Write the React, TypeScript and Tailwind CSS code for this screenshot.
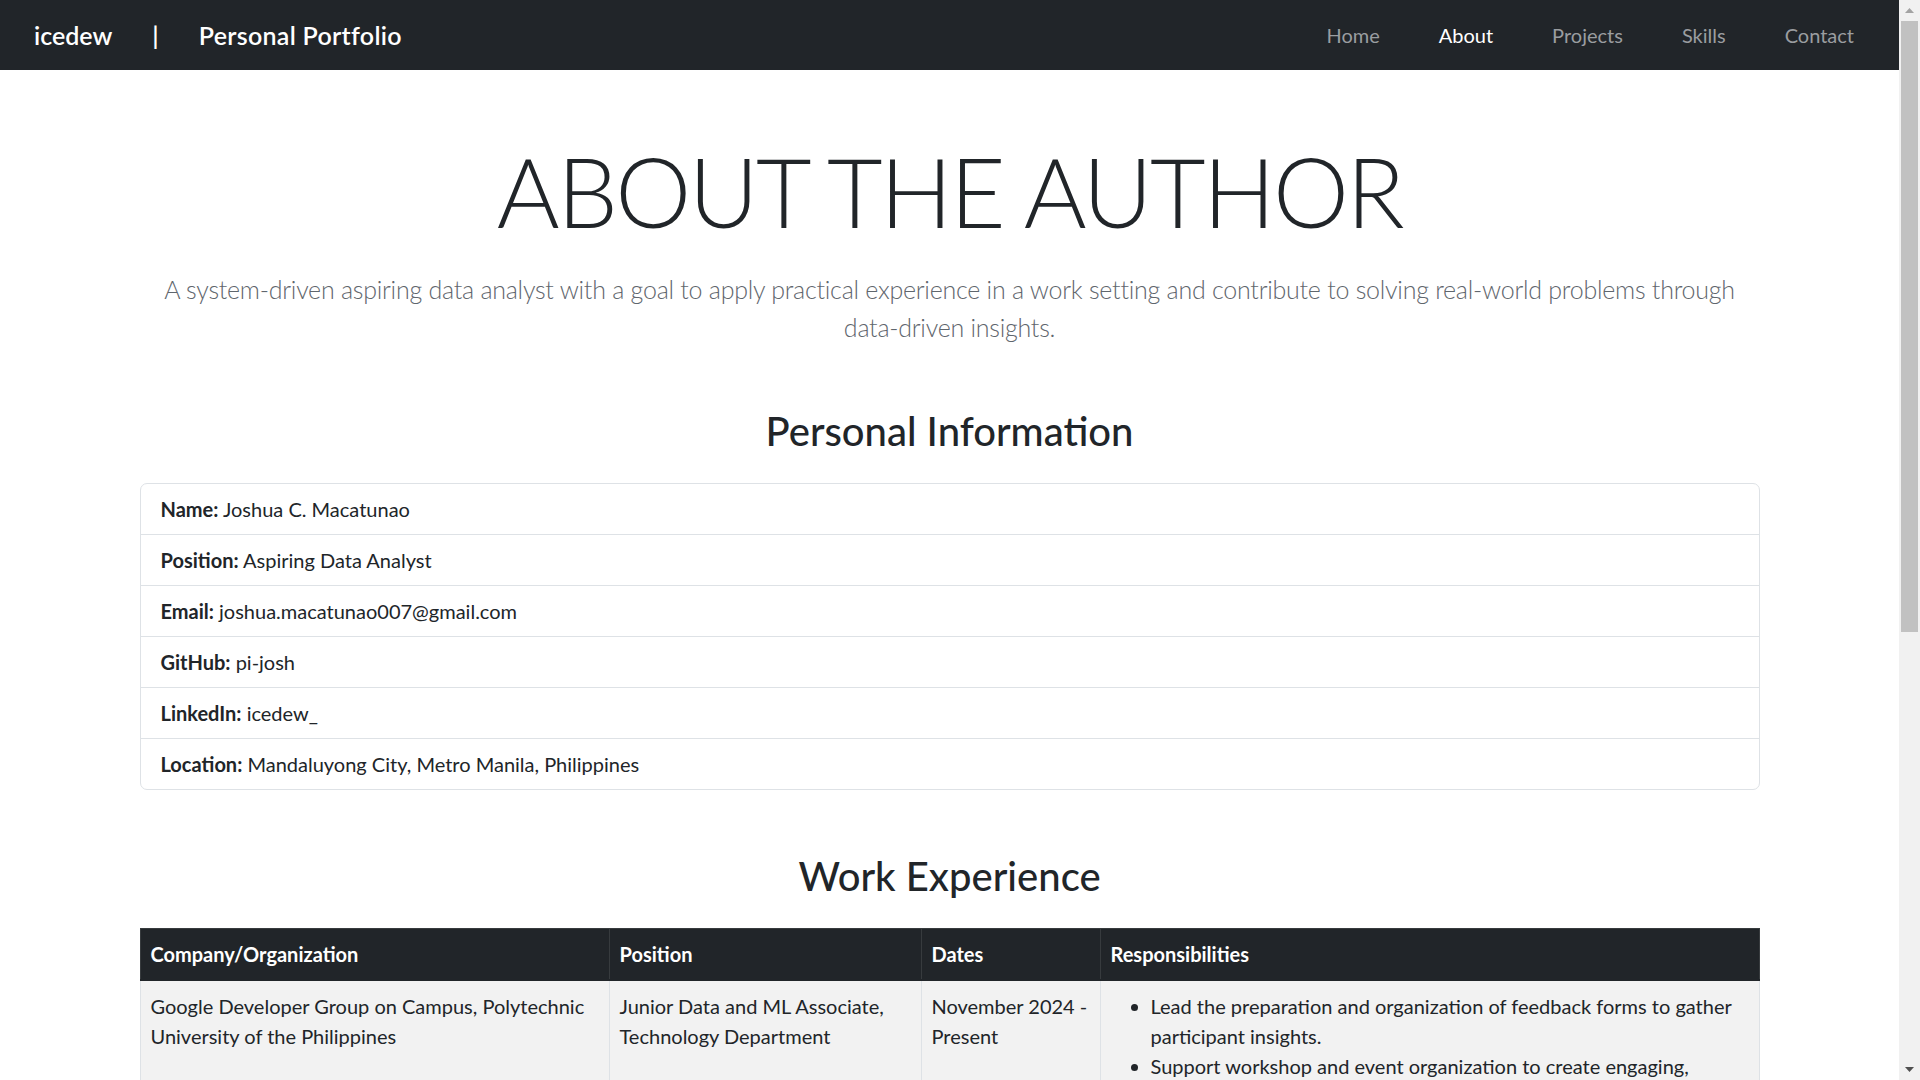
import { ReactNode } from 'react';

const navLinks = [
  { label: 'Home', active: false },
  { label: 'About', active: true },
  { label: 'Projects', active: false },
  { label: 'Skills', active: false },
  { label: 'Contact', active: false },
];

const info = [
  { label: 'Name:', value: 'Joshua C. Macatunao' },
  { label: 'Position:', value: 'Aspiring Data Analyst' },
  { label: 'Email:', value: 'joshua.macatunao007@gmail.com' },
  { label: 'GitHub:', value: 'pi-josh' },
  { label: 'LinkedIn:', value: 'icedew_' },
  { label: 'Location:', value: 'Mandaluyong City, Metro Manila, Philippines' },
];

const jobs = [
  {
    org: 'Google Developer Group on Campus, Polytechnic University of the Philippines',
    position: 'Junior Data and ML Associate, Technology Department',
    dates: 'November 2024 - Present',
    duties: [
      'Lead the preparation and organization of feedback forms to gather participant insights.',
      'Support workshop and event organization to create engaging, hands-on learning experiences for members.',
      'Assist in analyzing event data to improve future programs.',
    ],
  },
];

function Th({ children, className = '' }: { children: ReactNode; className?: string }) {
  return (
    <th className={`border border-[#373b3e] px-[10px] py-[10px] text-left align-top font-bold leading-[30px] ${className}`}>
      {children}
    </th>
  );
}

function Scrollbar() {
  return (
    <div className="flex h-full w-[21px] shrink-0 flex-col bg-[#f1f1f1]">
      <div className="flex h-[21px] items-center justify-center">
        <svg width="9" height="5" viewBox="0 0 9 5">
          <polygon points="0,5 4.5,0 9,5" fill="#a3a3a3" />
        </svg>
      </div>
      <div className="mx-[2px] h-[611px] bg-[#c1c1c1]" />
      <div className="flex-1" />
      <div className="flex h-[21px] items-center justify-center">
        <svg width="9" height="5" viewBox="0 0 9 5">
          <polygon points="0,0 9,0 4.5,5" fill="#505050" />
        </svg>
      </div>
    </div>
  );
}

export default function App() {
  return (
    <div className="flex h-[1080px] w-full overflow-hidden bg-white font-['Lato','Open_Sans',sans-serif] text-[20px] leading-[30px] text-[#212529]">
      <div className="min-w-0 flex-1 overflow-hidden">
        <nav className="flex h-[70px] items-center justify-between bg-[#212529] pl-[34px] pr-[45px]">
          <div className="flex items-center text-[25px] font-semibold text-white">
            <span>icedew</span>
            <span className="mx-[40px]">|</span>
            <span className="tracking-[0.3px]">Personal Portfolio</span>
          </div>
          <ul className="flex items-center gap-[59px]">
            {navLinks.map((link) => (
              <li
                key={link.label}
                className={link.active ? 'text-white' : 'text-[#9a9da0]'}
              >
                {link.label}
              </li>
            ))}
          </ul>
        </nav>

        <main className="mx-auto w-[1650px] px-[15px]">
          <section className="pt-[61px] text-center">
            <h1 className="mb-[20px] text-[96px] font-light leading-[120px] tracking-[-2.5px]">ABOUT THE AUTHOR</h1>
            <p className="text-[25px] font-light leading-[37.5px] tracking-[-0.25px] text-[#5f666d]">
              A system-driven aspiring data analyst with a goal to apply practical experience in a work setting and contribute to solving real-world problems through
              <br />
              data-driven insights.
            </p>
          </section>

          <section className="pt-[61px]">
            <h2 className="mb-[28px] text-center text-[40px] font-medium leading-[48px]">Personal Information</h2>
            <ul className="overflow-hidden rounded-[7px] border border-[#dee2e6]">
              {info.map((row, i) => (
                <li
                  key={row.label}
                  className={`px-[20px] py-[10px] ${i > 0 ? 'border-t border-[#dee2e6]' : ''}`}
                >
                  <strong className="font-bold">{row.label}</strong> {row.value}
                </li>
              ))}
            </ul>
          </section>

          <section className="pt-[62px]">
            <h2 className="mb-[28px] text-center text-[40px] font-medium leading-[48px]">Work Experience</h2>
            <table className="w-full table-fixed border-collapse">
              <colgroup>
                <col className="w-[469px]" />
                <col className="w-[312px]" />
                <col className="w-[179px]" />
                <col />
              </colgroup>
              <thead className="bg-[#212529] text-white">
                <tr className="border-b-2 border-[#212529]">
                  <Th>Company/Organization</Th>
                  <Th>Position</Th>
                  <Th>Dates</Th>
                  <Th>Responsibilities</Th>
                </tr>
              </thead>
              <tbody>
                {jobs.map((job) => (
                  <tr key={job.org} className="bg-[#f2f2f2]">
                    <td className="border border-[#dee2e6] px-[10px] py-[10px] align-top">{job.org}</td>
                    <td className="border border-[#dee2e6] px-[10px] py-[10px] align-top">{job.position}</td>
                    <td className="border border-[#dee2e6] px-[10px] py-[10px] align-top">{job.dates}</td>
                    <td className="border border-[#dee2e6] px-[10px] py-[10px] align-top">
                      <ul className="mb-[20px] list-disc pl-[40px]">
                        {job.duties.map((d) => (
                          <li key={d}>{d}</li>
                        ))}
                      </ul>
                    </td>
                  </tr>
                ))}
              </tbody>
            </table>
          </section>
        </main>
      </div>
      <Scrollbar />
    </div>
  );
}
